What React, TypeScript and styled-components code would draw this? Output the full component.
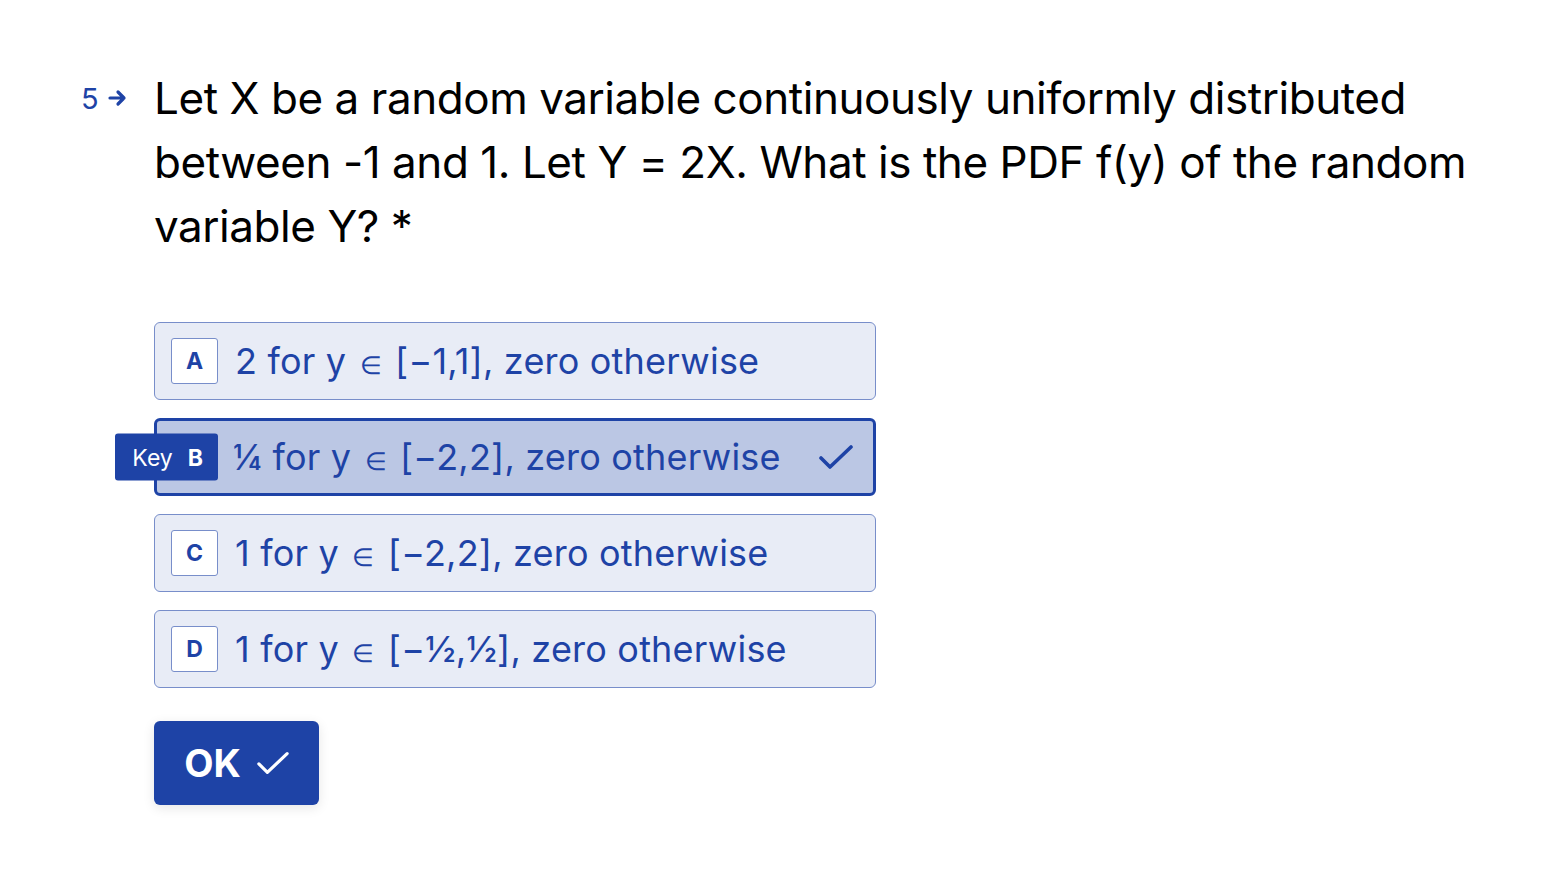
import React from "react";
import styled, { createGlobalStyle } from "styled-components";

const BLUE = "#1e43a6";

const Global = createGlobalStyle`
  html, body { margin: 0; padding: 0; background: #fff; }
  body { font-family: Inter, "Noto Sans", "Liberation Sans", sans-serif; -webkit-font-smoothing: antialiased; }
  * { box-sizing: border-box; }
`;

const Page = styled.main`
  width: 1546px;
  height: 872px;
  padding: 66px 0 0 81px;
  display: flex;
  align-items: flex-start;
`;

const Number = styled.div`
  width: 73px;
  flex: none;
  display: flex;
  align-items: center;
  gap: 9px;
  height: 64px;
  color: ${BLUE};
  font-size: 29px;
  line-height: 1;
`;

const Body = styled.div`
  display: flex;
  flex-direction: column;
  width: 1345px;
`;

const Question = styled.h1`
  margin: 0;
  font-weight: 400;
  font-size: 44px;
  line-height: 64px;
  letter-spacing: -0.45px;
  color: #000;
`;

const Options = styled.div`
  margin-top: 64px;
  display: flex;
  flex-direction: column;
  gap: 18px;
  width: 722px;
`;

const Option = styled.div<{ $selected?: boolean }>`
  position: relative;
  height: 78px;
  display: flex;
  align-items: center;
  padding: 0 20px 0 ${(p) => (p.$selected ? 12 : 16)}px;
  border-radius: 6px;
  background: ${(p) => (p.$selected ? "#bbc7e4" : "#e8ecf6")};
  border: ${(p) => (p.$selected ? `3px solid ${BLUE}` : "1px solid #788eca")};
  color: ${BLUE};
  font-size: 36px;
`;

const KeyBox = styled.span`
  width: 47px;
  height: 46px;
  flex: none;
  display: flex;
  align-items: center;
  justify-content: center;
  background: #fff;
  border: 1px solid #788eca;
  border-radius: 3px;
  font-size: 23px;
  font-weight: 700;
  color: ${BLUE};
`;

const KeyTip = styled.span`
  position: absolute;
  left: -42px;
  top: 50%;
  transform: translateY(-50%);
  height: 47px;
  width: 103px;
  display: flex;
  align-items: center;
  justify-content: flex-end;
  gap: 15px;
  padding-right: 15px;
  background: ${BLUE};
  border-radius: 3px;
  color: #fff;
  font-size: 23px;
`;

const KeyLetter = styled.b`
  font-weight: 700;
`;

const KeySpacer = styled.span`
  width: 47px;
  flex: none;
`;

const Label = styled.span`
  margin-left: 17px;
  flex: 1;
  white-space: nowrap;
  letter-spacing: 0.2px;
`;

const Elem = styled.span`
  font-size: 0.7em;
  margin: 0 3px;
`;

const Check = styled.svg`
  flex: none;
  width: 34px;
  height: 26px;
`;

const OkCheck = styled(Check)`
  width: 32px;
`;

const OkButton = styled.button`
  margin-top: 33px;
  width: 165px;
  height: 84px;
  border: none;
  border-radius: 6px;
  background: ${BLUE};
  color: #fff;
  font-family: inherit;
  font-size: 38px;
  font-weight: 700;
  display: flex;
  align-items: center;
  justify-content: center;
  gap: 16px;
  box-shadow: 0 3px 12px rgba(0, 0, 0, 0.1);
  padding: 0;
`;

const Arrow = () => (
  <svg width="20" height="18" viewBox="0 0 20 18" fill="none">
    <path d="M2 9h14M10 3l6 6-6 6" stroke={BLUE} strokeWidth="3.2" strokeLinecap="round" strokeLinejoin="round" />
  </svg>
);

const options = [
  { key: "A", pre: "2 for y", post: "[−1,1], zero otherwise" },
  { key: "B", pre: "¼ for y", post: "[−2,2], zero otherwise", selected: true },
  { key: "C", pre: "1 for y", post: "[−2,2], zero otherwise" },
  { key: "D", pre: "1 for y", post: "[−½,½], zero otherwise" },
];

const OptionText = ({ pre, post }: { pre: string; post: string }) => (
  <Label>
    {pre} <Elem>∈</Elem> {post}
  </Label>
);

export default function App() {
  return (
    <>
      <Global />
      <Page>
        <Number>
          <span>5</span>
          <Arrow />
        </Number>
        <Body>
          <Question>
            Let X be a random variable continuously uniformly distributed between -1 and 1. Let Y = 2X. What is the PDF
            f(y) of the random variable Y? *
          </Question>
          <Options>
            {options.map((o) =>
              o.selected ? (
                <Option key={o.key} $selected>
                  <KeyTip>
                    Key <KeyLetter>{o.key}</KeyLetter>
                  </KeyTip>
                  <KeySpacer />
                  <OptionText pre={o.pre} post={o.post} />
                  <Check viewBox="0 0 34 26" fill="none">
                    <path d="M2 14l9 9L32 3" stroke={BLUE} strokeWidth="3.6" strokeLinecap="round" strokeLinejoin="round" />
                  </Check>
                </Option>
              ) : (
                <Option key={o.key}>
                  <KeyBox>{o.key}</KeyBox>
                  <OptionText pre={o.pre} post={o.post} />
                </Option>
              )
            )}
          </Options>
          <OkButton>
            OK
            <OkCheck viewBox="0 0 34 26" fill="none">
              <path d="M2 14l9 9L32 3" stroke="#fff" strokeWidth="3.4" strokeLinecap="round" strokeLinejoin="round" />
            </OkCheck>
          </OkButton>
        </Body>
      </Page>
    </>
  );
}
